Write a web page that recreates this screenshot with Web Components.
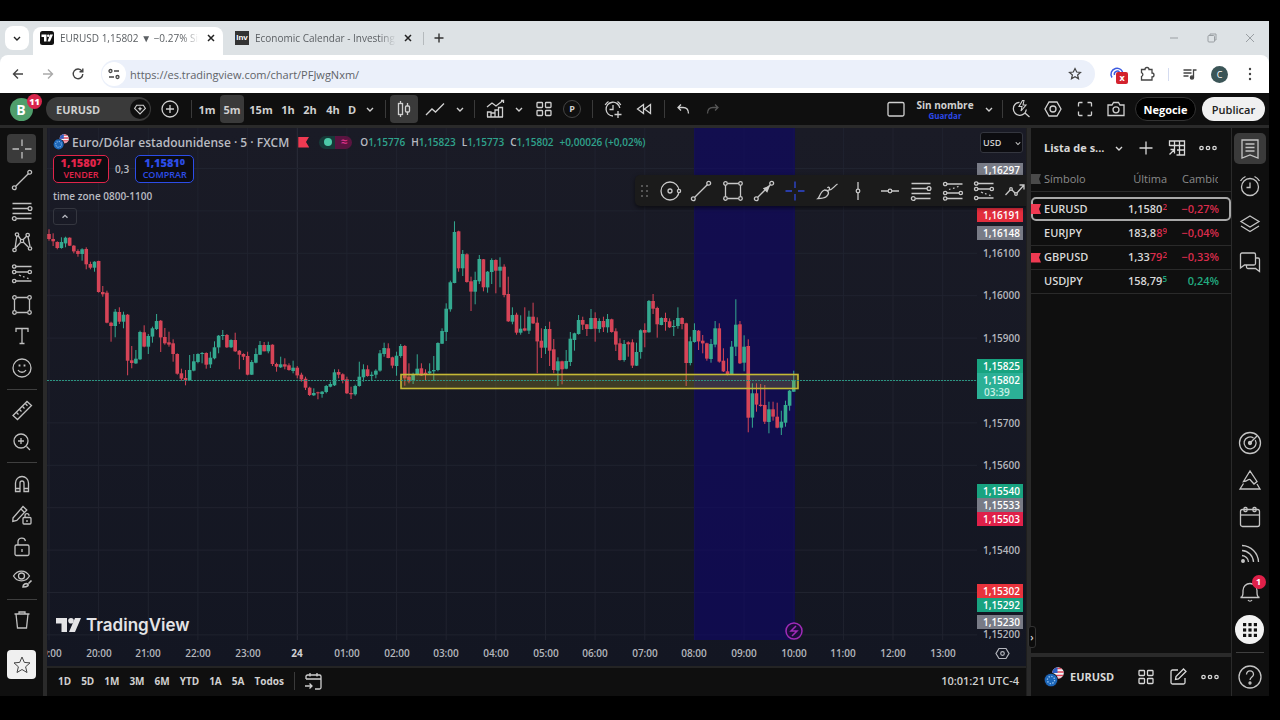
<!DOCTYPE html>
<html lang="es">
<head>
<meta charset="utf-8">
<title>EURUSD 1,15802 ▼ −0.27% Sin nombre</title>
<style>
  html, body { margin: 0; background: #000; }
  body { min-height: 100vh; box-sizing: border-box; padding: 21px 11px 24px 0; display: flex;
    font-family: "Open Sans", "Noto Sans", sans-serif; font-size: 12px; color: #d6d6d6; }
</style>
</head>
<body>
<browser-window>
  <tab-strip slot="tabs"></tab-strip>
  <address-row slot="address"></address-row>
  <tv-workspace></tv-workspace>
</browser-window>

<script>
const ICONS = {
  chevron: '<path d="M9 11l3 3 3-3" stroke-width="1.4"/>',
  up: '<path d="M9 13l3-3 3 3" stroke-width="1.6"/>',
  close: '<path d="M9 9l6 6M15 9l-6 6" stroke-width="1.5"/>',
  plus: '<path d="M12 7.500v9M7.500 12h9" stroke-width="1.4"/>',
  plusbig: '<path d="M12 5.500v13M5.500 12h13"/>',
  back: '<path d="M17 12H7.500M12 7.500L7.500 12l4.500 4.500" stroke-width="1.4"/>',
  forward: '<path d="M7 12h9.500M12 7.500l4.500 4.500-4.500 4.500" stroke-width="1.4"/>',
  reload: '<path d="M16 9.200A4.800 4.800 0 1 0 16.800 12M16.800 6.500v3.300h-3.300" stroke-width="1.4"/>',
  tune: '<circle cx="8.500" cy="9" r="1.500"/><path d="M12 9h5M7 15h5"/><circle cx="15.500" cy="15" r="1.500"/>',
  star: '<path d="M12 6.500l1.700 3.500 3.800.4-2.900 2.600.9 3.800-3.500-2-3.500 2 .9-3.800-2.900-2.600 3.800-.4z" stroke-width="1.200"/>',
  starbig: '<path d="M12 4l2.300 5.400 5.700.5-4.400 3.900 1.400 5.700-5-3-5 3 1.400-5.700L4 9.900l5.700-.5z" stroke-width="1"/>',
  puzzle: '<path d="M6.500 7.500h3.500a2 2 0 0 1 4 0h3v3.500a2 2 0 0 1 0 4v3H6.500v-3.500a2 2 0 0 0 0-3.800z" stroke-width="1.300"/>',
  playlist: '<path d="M5.500 8h8M5.500 11h8M5.500 14h5M15.500 15V8h3"/><circle cx="14" cy="15.500" r="1.600" fill="currentColor"/>',
  dotsv: '<g fill="currentColor" stroke="none"><circle cx="12" cy="7" r="1.200"/><circle cx="12" cy="12" r="1.200"/><circle cx="12" cy="17" r="1.200"/></g>',
  min: '<path d="M8 12h8" stroke-width="1"/>',
  restore: '<rect x="8" y="9.500" width="6.500" height="6.500" rx="1" stroke-width="1"/><path d="M10 9V8h6v6h-1" stroke-width="1"/>',
  closewin: '<path d="M8 8l8 8M16 8l-8 8" stroke-width="1"/>',
  gem: '<path d="M8 7.500h8l2.500 3.800L12 18l-6.500-6.700z"/><path d="M12 8.800l.9 2 2 .9-2 .9-.9 2-.9-2-2-.9 2-.9z" fill="currentColor" stroke="none"/>',
  pluscircle: '<circle cx="12" cy="12" r="8"/><path d="M12 8v8M8 12h8"/>',
  candles: '<path d="M8.500 4v2.500M8.500 17.500V20M15.500 6v3M15.500 15v3"/><rect x="6.500" y="6.500" width="4" height="11"/><rect x="13.500" y="9" width="4" height="6" rx="1"/>',
  line: '<path d="M3 18l6-6 3.500 3L21 6.500"/>',
  indicators: '<path d="M4 10l5-4 4 3 7-5.500M18 3.500h2.500V6"/><path d="M4.500 20v-5h3.500v5M8 20v-4h4v4M12 20v-7h3.500v7M15.500 20v-9.500h4V20M4 20h16"/>',
  grid: '<rect x="5" y="5.500" width="5.500" height="5" rx=".8"/><rect x="13.500" y="5.500" width="5.500" height="5" rx=".8"/><rect x="5" y="13.500" width="5.500" height="5" rx=".8"/><rect x="13.500" y="13.500" width="5.500" height="5" rx=".8"/>',
  alarm: '<path d="M18.800 11A6.900 6.900 0 1 0 12 19M12 8v4.500H8.500M4.200 8a9 9 0 0 1 3.300-3.500M16.500 4.500A9 9 0 0 1 19.800 8M17 14v7M13.500 17.500h7"/>',
  rewind: '<path d="M11.500 7.500v9l-6-4.500zM18.500 7.500v9l-6-4.500z"/>',
  undo: '<path d="M17.500 16.500c0-4-2-6-5.500-6H7.500M10 7.500l-3 3 3 3"/>',
  redo: '<path d="M6.500 16.500c0-4 2-6 5.500-6h4.500M14 7.500l3 3-3 3"/>',
  square: '<rect x="4" y="5.500" width="16" height="13.500" rx="1.500"/>',
  quick: '<path d="M10.500 5.300A6.500 6.500 0 1 0 17.300 12.500M16 16l4.500 4"/><path d="M13.500 3.500l-3.500 6h3l-1 4.500 5-6h-3l1-4.500z" stroke-width="1.100"/>',
  hex: '<path d="M8 5h8l4 7-4 7H8l-4-7z"/><circle cx="12" cy="12" r="3"/>',
  full: '<path d="M5.500 9.500V6.500a1 1 0 0 1 1-1h3M14.500 5.500h3a1 1 0 0 1 1 1v3M18.500 14.500v3a1 1 0 0 1-1 1h-3M9.500 18.500h-3a1 1 0 0 1-1-1v-3"/>',
  camera: '<path d="M4 8h4l1.500-2.500h5L16 8h4v10.500H4z"/><circle cx="12" cy="12.800" r="3"/>',
  cross: '<path d="M12 2.500V9M12 15v6.500M2.500 12H9M15 12h6.500"/>',
  trend: '<path d="M5.700 18.300L18.300 5.700"/><circle cx="4.300" cy="19.700" r="1.900"/><circle cx="19.700" cy="4.300" r="1.900"/>',
  fibo: '<path d="M2.500 4.500h19M2.500 9.500h15.500M2.500 14.500h19M6.500 19.500H21.500"/><circle cx="20" cy="9.500" r="1.900"/><circle cx="4.300" cy="19.500" r="1.900"/>',
  pattern: '<path d="M5 18.500L6.800 6M8 5.500l3.200 4.500M12.800 10l4-4M13.200 12l5 5M10.500 12.500l-5.500 6M18 6.500l2 10"/><circle cx="7" cy="4.500" r="1.700"/><circle cx="17.700" cy="5" r="1.700"/><circle cx="12" cy="11" r="1.700"/><circle cx="4.500" cy="20" r="1.700"/><circle cx="20" cy="18.500" r="1.700"/>',
  forecast: '<path d="M6 4.500h15.500M6 10h12M6 19h15.500"/><path d="M9 13l2 1M13 14.500l1.500.7M17 16l1.500.7"/><circle cx="4.200" cy="4.500" r="1.700"/><circle cx="4.200" cy="10" r="1.700"/><circle cx="19.800" cy="10" r="1.700"/><circle cx="4.200" cy="19" r="1.700"/>',
  forecast2: '<path d="M6 5h15.500M6 14h12M6 19.500h15.500"/><path d="M8 10.500l1.500-.5M12 9.500l1.500-.7M16 8l1.500-.6"/><circle cx="4.200" cy="5" r="1.700"/><circle cx="4.200" cy="14" r="1.700"/><circle cx="19.800" cy="14" r="1.700"/><circle cx="4.200" cy="19.500" r="1.700"/>',
  rect: '<path d="M6.500 4.500h11M6.500 19.500h11M4.500 6.500v11M19.500 6.500v11"/><circle cx="4.500" cy="4.500" r="1.800"/><circle cx="19.500" cy="4.500" r="1.800"/><circle cx="4.500" cy="19.500" r="1.800"/><circle cx="19.500" cy="19.500" r="1.800"/>',
  text: '<path d="M6 8V4.500h12V8M12 4.500v15M9.500 19.500h5"/>',
  smile: '<circle cx="12" cy="12" r="9"/><path d="M8 14c1.800 3 6.200 3 8 0"/><path d="M9.500 8.500v2M14.500 8.500v2" stroke-width="1.800"/>',
  ruler: '<path d="M3 17.500L17 3.500l4.500 4L7.500 21.500z"/><path d="M6.500 14.500l2 2M9.500 11.500l2 2M12.500 8.500l2 2M15.500 5.800l2 2"/>',
  zoom: '<circle cx="11" cy="11" r="7"/><path d="M16.500 16.500l3.500 3.500M11 8v6M8 11h6"/>',
  magnet: '<path d="M5.500 19.500V11a6.500 6.500 0 0 1 13 0v8.500H14V11a2 2 0 0 0-4 0v8.500zM5.500 16.500H10M14 16.500h4.500"/>',
  pencil: '<path d="M3 15l10-11.500 3.800 3.500-10 10.500-4 1zM11 6l3.500 3.500"/><rect x="13" y="14.500" width="8" height="6.500" rx="1"/><path d="M15 14.500v-1.800a2 2 0 0 1 4 0M17 17v2"/>',
  lock: '<rect x="5" y="10" width="14" height="10.500" rx="1.500"/><path d="M8 10V7a3.800 3.800 0 0 1 7.500-1M12 14v3"/>',
  eye: '<path d="M3.500 10C7.500 3.500 15.500 3.500 19.500 10 15.500 16.500 7.500 16.500 3.500 10z"/><circle cx="11.500" cy="10" r="3"/><path d="M13 21c0-3 3-4 4.500-3s.5 3-4.500 3zM18.500 17.500l3-3" stroke-width="1.600"/>',
  trash: '<path d="M4.500 6h15M9 6V4h6v2M6 6l1.500 14h9L18 6"/>',
  measure: '<circle cx="12" cy="12" r="9"/><circle cx="12" cy="12" r="2"/><circle cx="21" cy="12" r="1.600" fill="#1b1b1b"/>',
  arrow: '<path d="M5.700 18.300L18 6"/><path d="M17 7.500l-5 2 3 3z" fill="currentColor"/><circle cx="4.300" cy="19.700" r="1.900"/><circle cx="19.700" cy="4.300" r="1.900"/>',
  brush: '<path d="M3 19.500c2-1.500 2-7 6.500-8.500 4 0 5.500 3 2 6.500-2.500 2-5 2-8.500 2zM12.500 9c1-2 3 0 1.500 2 4 0 5-4 8.500-6"/>',
  vline: '<path d="M12 3v7M12 14v7"/><circle cx="12" cy="12" r="1.800"/>',
  hline: '<path d="M3 12h7M14 12h7"/><circle cx="12" cy="12" r="1.800"/>',
  zigzag: '<path d="M2.500 16l5.500-6 5 5 8-9M16.500 6H21v4.500"/><circle cx="8" cy="10" r="1.300" fill="#1b1b1b"/><circle cx="13" cy="15" r="1.300" fill="#1b1b1b"/>',
  table: '<path d="M4.500 10V5h15v14h-8M4.500 9.500h15M9.500 5v8M14.500 5v14M12 14h7.500M4.500 18.500l5-5M5.500 13.500h4v4"/>',
  dots: '<circle cx="5.500" cy="12" r="1.700"/><circle cx="12" cy="12" r="1.700"/><circle cx="18.500" cy="12" r="1.700"/>',
  list: '<path d="M4 3h16v18l-8-3-8 3zM7.500 7h9M7.500 10.500h9M7.500 14h9"/>',
  clock: '<circle cx="12" cy="13" r="8.500"/><path d="M12 8.500v5H8.500M2.500 7a11 11 0 0 1 5-4.500M16.500 2.500a11 11 0 0 1 5 4.500"/>',
  layers: '<path d="M12 4l9 5.500-9 5.500-9-5.500zM3 14l9 5.500 9-5.500"/>',
  chat: '<path d="M4 3h12a1.500 1.500 0 0 1 1.500 1.500v9A1.500 1.500 0 0 1 16 15H6.500L2.500 18V4.500A1.500 1.500 0 0 1 4 3zM17.500 8H20a1.500 1.500 0 0 1 1.500 1.500V21.500L17.500 18.500H10a1.500 1.500 0 0 1-1.500-1.500v-2"/>',
  radar: '<circle cx="12" cy="12" r="10.500"/><path d="M15.500 7A6 6 0 1 0 17.300 9M12 12l7-7"/><circle cx="12" cy="12" r="1.500" fill="currentColor"/>',
  pyramid: '<path d="M5.500 13.500L12 3l7 10.500-3 2.500-4-4.500c-1.500-1-2.500 1.500-4 1.500zM5.500 15.500L2 21h20l-3-5"/>',
  calendar: '<rect x="2.500" y="4.500" width="19" height="17" rx="2"/><path d="M2.500 10h19"/><rect x="6" y="2.500" width="3" height="4" rx="1"/><rect x="15" y="2.500" width="3" height="4" rx="1"/>',
  rss: '<path d="M4 3.500A17 17 0 0 1 20.500 20M4 8.500A12 12 0 0 1 15.500 20M4 13.500a7 7 0 0 1 6.500 6.500"/><circle cx="5" cy="19" r="1.300" fill="currentColor"/>',
  bell: '<path d="M2.500 18.500c2-.5 2.500-1.500 2.500-5v-2a7 7 0 0 1 14 0v2c0 3.500.5 4.500 2.500 5zM2.500 15.800M10 21c1 1.500 3 1.500 4 0"/>',
  apps: '<g fill="currentColor" stroke="none"><rect x="5" y="5" width="3.200" height="3.200"/><rect x="10.400" y="5" width="3.200" height="3.200"/><rect x="15.800" y="5" width="3.200" height="3.200"/><rect x="5" y="10.400" width="3.200" height="3.200"/><rect x="10.400" y="10.400" width="3.200" height="3.200"/><rect x="15.800" y="10.400" width="3.200" height="3.200"/><rect x="5" y="15.800" width="3.200" height="3.200"/><rect x="10.400" y="15.800" width="3.200" height="3.200"/><rect x="15.800" y="15.800" width="3.200" height="3.200"/></g>',
  help: '<circle cx="12" cy="12" r="11"/><path d="M8.500 9.500c0-5 7-4.500 7 0 0 2.500-3.500 2.500-3.500 5.500"/><circle cx="12" cy="18" r="1"/>',
  edit: '<path d="M12 5H6.500A1.500 1.500 0 0 0 5 6.500v11A1.500 1.500 0 0 0 6.500 19h11a1.500 1.500 0 0 0 1.500-1.500V13M9.500 14.500l.5-3L17.500 4 20 6.500 12.500 14z"/>',
  goto: '<path d="M5 10V7.500A1.500 1.500 0 0 1 6.500 6h12A1.500 1.500 0 0 1 20 7.500v11a1.500 1.500 0 0 1-1.500 1.500H14M5 10h15M9 4v3.500M16 4v3.500M4 17h7M8.500 14.500L11 17l-2.500 2.500"/>',
  grip: '<g fill="#555" stroke="none"><rect x="8" y="6" width="2" height="2"/><rect x="13" y="6" width="2" height="2"/><rect x="8" y="11" width="2" height="2"/><rect x="13" y="11" width="2" height="2"/><rect x="8" y="16" width="2" height="2"/><rect x="13" y="16" width="2" height="2"/></g>',
  tv: '<rect x="5" y="5" width="14" height="14" rx="2.500" fill="#111" stroke="none"/><path d="M6.500 8.500h5v7H9v-4.500H6.500zM15 8.500h3l-3 7h-2.500z" fill="#fff" stroke="none"/><circle cx="13.200" cy="9.700" r="1.200" fill="#fff" stroke="none"/>'
};

/* Base class: writes the styles and the markup of the element into its open shadow root. */
class Part extends HTMLElement {
  connectedCallback() {
    if (this.shadowRoot) return;
    this.attachShadow({ mode: "open" }).innerHTML =
      `<style>*{box-sizing:border-box}button{font:inherit;color:inherit;background:none;border:0;padding:0;margin:0;display:flex;align-items:center;justify-content:center}${this.css()}</style>${this.html()}`;
  }
}
const define = (name, css, html) =>
  customElements.define(name, class extends Part {
    css() { return typeof css === "function" ? css(this) : css; }
    html() { return typeof html === "function" ? html(this) : html; }
  });
const icon = (name, size = 24) => `<ui-icon name="${name}" size="${size}"></ui-icon>`;
const btn = (name, label, cls = "") => `<button class="${cls}" aria-label="${label}">${icon(name)}</button>`;

define("ui-icon",
  el => `:host{display:block;flex:none;width:${el.getAttribute("size")}px;height:${el.getAttribute("size")}px} svg{display:block}`,
  el => `<svg viewBox="0 0 24 24" width="100%" height="100%" fill="none" stroke="currentColor" stroke-width="1.300" aria-hidden="true">${ICONS[el.getAttribute("name")]}</svg>`);

define("pair-logo", `:host{display:block;flex:none;width:20px;height:20px} svg{display:block}`,
  `<svg viewBox="0 0 20 20" width="20" height="20"><clipPath id="c"><circle cx="14" cy="6" r="5.800"/></clipPath>
   <g clip-path="url(#c)"><path fill="#f4f4f8" d="M8 0h12v12H8z"/><path stroke="#e0455a" stroke-width="1.600" d="M8 1.500h12M8 5h12M8 8.500h12M8 11.500h12"/><path fill="#2f5fc4" d="M8 0h5.500v6H8z"/></g>
   <circle cx="7" cy="13" r="7.200" fill="#14161f"/><circle cx="7" cy="13" r="6.300" fill="#1c66b8"/><circle cx="7" cy="13" r="3.600" fill="none" stroke="#9cc7f2" stroke-width="1.300" stroke-dasharray="1.300 1.500"/></svg>`);

define("browser-window",
  `:host{display:flex;flex-direction:column;flex:1;min-width:0}
   ::slotted(tv-workspace){flex:1}`,
  `<slot name="tabs"></slot><slot name="address"></slot><slot></slot>`);

define("tab-strip",
  `:host{display:block;background:#dde2e5;color:#5c6064;font-size:10px}
   div{display:flex;align-items:center;height:34px}
   .menu{width:24px;height:24px;border-radius:8px;background:#fff;color:#222;margin:0 4px 0 5px}
   .tab{border-radius:8px 8px 0 0;height:28px;align-self:flex-end;padding:0 0 6px 2px;width:190px}
   .on{background:#fff}
   .two{width:194px;padding-left:8px}
   .two button{margin-right:-3px}
   a{flex:1;min-width:0;white-space:nowrap;color:inherit;text-decoration:none;margin-left:1px;
     -webkit-mask:linear-gradient(90deg,#000 88%,transparent);mask:linear-gradient(90deg,#000 88%,transparent)}
   .tab button{color:#222}
   .inv{flex:none;width:14px;height:14px;background:#333;color:#fff;font:bold 8px/14px "Liberation Sans",sans-serif;text-align:center;margin:0 5px 0 4px}
   .bar{width:1px;height:13px;background:#b5babd;margin:0 3px 0 6px}
   .new{color:#333}
   .win{margin-left:auto;color:#9a9fa3;gap:14px;padding-right:7px}`,
  `<div><button class="menu" aria-label="Buscar pestañas">${icon("chevron")}</button>
   <div class="tab on">${icon("tv")}<a href="#eurusd">EURUSD 1,15802 ▼ −0.27% Sin</a>${btn("close", "Cerrar")}</div>
   <div class="tab two"><span class="inv">Inv</span><a href="#calendar">Economic Calendar - Investing.</a>${btn("close", "Cerrar")}</div>
   <span class="bar"></span>${btn("plus", "Nueva pestaña", "new")}
   <div class="win">${btn("min", "Minimizar")}${btn("restore", "Restaurar")}${btn("closewin", "Cerrar ventana")}</div></div>`);

define("address-row",
  `:host{display:block;background:#dde2e5;color:#444}
   .row{display:flex;align-items:center;height:38px;background:#fff;border-radius:8px 8px 0 0;padding:0 7px 0 6px;gap:6px}
   .off{color:#aaa}
   .box{flex:1;min-width:0;display:flex;align-items:center;height:28px;border-radius:14px;background:#ebf0fa;padding:0 8px 0 1px;margin:0 4px 0 5px}
   .site{width:24px;height:24px;border-radius:12px;background:#fff}
   input{flex:1;min-width:0;border:0;outline:0;background:none;font:11px "Open Sans",sans-serif;color:#5f6368;padding:0 4px}
   .ext{position:relative;color:#3d5be0;width:24px}
   .ext b{position:absolute;left:11px;top:10px;width:12px;height:12px;border-radius:2px;background:#d3222d;color:#fff;font-size:9px;line-height:12px}
   .bar{width:1px;height:13px;background:#d5dcf0;margin:0 3px}
   .me{width:17px;height:17px;border-radius:9px;background:#3b5557;color:#fff;font-size:9px;margin:0 4px 0 3px}`,
  `<div class="row">${btn("back", "Atrás")}${btn("forward", "Adelante", "off")}${btn("reload", "Recargar")}
   <div class="box"><button class="site" aria-label="Información del sitio">${icon("tune")}</button>
   <input aria-label="Dirección" value="https://es.tradingview.com/chart/PFJwgNxm/">${btn("star", "Favorito")}</div>
   <button class="ext" aria-label="Extensión"><svg width="24" height="24" fill="none" stroke="currentColor" stroke-width="1.500"><path d="M7 15.500a6 6 0 1 1 11-3M9.500 13a3 3 0 0 1 5-3"/></svg><b>x</b></button>
   ${btn("puzzle", "Extensiones")}<span class="bar"></span>${btn("playlist", "Medios")}<button class="me">C</button>${btn("dotsv", "Menú")}</div>`);

const cell = (w, content, cls = "", label = "") =>
  `<button class="${cls}" style="width:${w}px"${label ? ` aria-label="${label}"` : ""}>${content}</button>`;
const bar = w => `<span class="bar" style="width:${w}px"></span>`;

define("tv-topbar",
  `:host{display:flex;align-items:center;height:35px;background:#0f0f0f;border-bottom:3px solid #2a2a2a;color:#d0d0d0;font-size:11px;font-weight:700;padding-right:4px}
   button{flex:none;height:28px}
   .user{position:relative}
   .user i{font-style:normal;width:23px;height:23px;border-radius:12px;background:#4f9e6b;color:#fff;font-size:14px;line-height:23px;margin-right:4px}
   .user b{position:absolute;left:27px;top:-1px;width:15px;height:15px;border-radius:8px;background:#d8264c;color:#fff;font-size:9px;line-height:15px}
   .pill{width:105px;height:24px;border-radius:12px;background:#3a3a3a;justify-content:space-between;padding:0 1px 0 10px}
   .pill span{width:20px;height:20px;border-radius:10px;background:#0f0f0f;display:flex;align-items:center;justify-content:center}
   .bar{flex:none;height:18px;background:linear-gradient(#3a3a3a,#3a3a3a) center/1px 100% no-repeat}
   .on{background:#3a3a3a;border-radius:4px}
   .p i{font:bold 9px/16px "Open Sans",sans-serif;width:18px;height:18px;border:1px solid #444;border-radius:9px}
   .dim{color:#555}
   .fill{flex:1}
   .name{flex-direction:column;font-size:10px;line-height:14px}
   .name small{font-size:8px;line-height:11px;margin-top:-2px;color:#2c48e8}
   .trade{width:61px;height:24px;border:1px solid #333;border-radius:12px;background:#000;color:#fff;margin:0 6px 0 3px}
   .pub{width:63px;height:24px;border-radius:12px;background:#f0f0f0;color:#222;font-weight:600}`,
  `${cell(46, "<i>B</i><b>11</b>", "user", "Perfil")}<button class="pill">EURUSD<span>${icon("gem", 20)}</span></button>
   ${cell(38, icon("pluscircle"), "", "Comparar")}${bar(5)}
   ${cell(26, "1m")}${cell(24, "5m", "on")}${cell(34, "15m")}${cell(20, "1h")}${cell(24, "2h")}${cell(22, "4h")}${cell(16, "D")}${cell(20, icon("chevron"), "", "Intervalos")}${bar(10)}
   ${cell(28, icon("candles"), "on", "Velas")}${cell(34, icon("line"), "", "Línea")}${cell(16, icon("chevron"), "", "Tipos")}${bar(12)}
   ${cell(30, icon("indicators"), "", "Indicadores")}${cell(18, icon("chevron"), "", "Favoritos")}${cell(32, icon("grid"), "", "Plantillas")}${cell(24, "<i>P</i>", "p")}${bar(16)}
   ${cell(26, icon("alarm"), "", "Alerta")}${cell(36, icon("rewind"), "", "Reproducir")}${bar(4)}${cell(34, icon("undo"), "", "Deshacer")}${cell(26, icon("redo"), "dim", "Rehacer")}
   <span class="fill"></span>
   ${cell(28, icon("square"), "", "Disposición")}${cell(70, "<span>Sin nombre</span><small>Guardar</small>", "name")}${cell(18, icon("chevron"), "", "Gestionar")}${bar(8)}
   ${cell(30, icon("quick"), "", "Búsqueda rápida")}${cell(34, icon("hex"), "", "Ajustes")}${cell(30, icon("full"), "", "Pantalla completa")}${cell(32, icon("camera"), "", "Captura")}
   <button class="trade">Negocie</button><button class="pub">Publicar</button>`);

define("tool-rail",
  `:host{display:flex;flex-direction:column;align-items:center;width:47px;background:#0f0f0f;border-right:4px solid #2a2a2a;color:#c0c0c0;padding:5px 0 17px}
   button{flex:1 1 0;width:29px}
   .on{background:#3a3a3a;border-radius:4px;flex:0 0 29px;margin:1px 0}
   hr{width:30px;height:1px;border:0;background:#3f3f3f;margin:5px 0}
   .fav{flex:0 0 29px;margin-top:14px;border-radius:4px;background:#f0f0f0;color:#444}`,
  `${btn("cross", "Cruz", "on")}${btn("trend", "Línea de tendencia")}${btn("fibo", "Fibonacci")}${btn("pattern", "Patrones")}${btn("forecast", "Previsión")}${btn("rect", "Formas")}${btn("text", "Texto")}${btn("smile", "Iconos")}<hr>
   ${btn("ruler", "Medir")}${btn("zoom", "Acercar")}<hr>${btn("magnet", "Imán")}${btn("pencil", "Modo dibujo")}${btn("lock", "Bloquear")}${btn("eye", "Ocultar")}<hr>
   ${btn("trash", "Eliminar")}${btn("starbig", "Favoritos", "fav")}`);

define("favorite-tools",
  `:host{display:flex;align-items:center;height:31px;background:#1b1b1b;border-radius:5px;color:#c8c8c8;box-shadow:0 2px 4px #0008}
   .grip{width:19px;flex:none}
   button:not(.grip){flex:1 1 0;min-width:0}
   .sel{color:#2f48d8}`,
  `${btn("grip", "Mover", "grip")}${btn("measure", "Círculo")}${btn("trend", "Tendencia")}${btn("rect", "Rectángulo")}${btn("arrow", "Flecha")}${btn("cross", "Cruz", "sel")}${btn("brush", "Pincel")}${btn("vline", "Vertical")}${btn("hline", "Horizontal")}${btn("fibo", "Fibonacci")}${btn("forecast2", "Posición larga")}${btn("forecast", "Posición corta")}${btn("zigzag", "Polilínea")}`);

/* Five-minute bars from 19:00 to 10:00. Each: direction, high, body top, body bottom, low, in thirds of a pixel below the segment's top. */
const SEGMENTS = [
  { top: 92, bars: `r 28 42 57 62|r 40 57 64 78|r 64 66 84 88|g 52 66 84 86|g 50 53 70 82|r 52 53 77 78|r 75 77 94 100|r 88 93 102 110|g 85 88 102 122|r 82 87 133 148|r 125 132 143 148|g 124 125 143 155|r 122 123 216 218|r 198 216 223 230|r 212 218 308 310|r 305 308 318 365|g 267 275 318 352|r 262 276 305 312|g 275 284 305 325|r 282 284 422 466|r 378 421 429 445|g 390 416 430 432|g 332 336 418 420|r 316 337 380 382|g 342 348 380 402|g 320 325 350 368|g 282 303 327 330|r 300 302 352 396|r 324 351 370 374|r 335 367 374 380|r 358 370 402 425|r 400 402 461 464|r 446 460 476 482|r 450 474 481 496|g 405 450 481 482|g 402 424 452 454|g 400 402 426 430|g 396 399 402 430|r 397 399 434 446|g 395 413 433 444|g 364 382 415 418|g 345 347 382 400|g 330 345 348 360|r 342 345 382 384|g 358 360 382 384|r 338 360 394 396` },
  { top: 82, bars: `r 420 422 434 478|r 430 432 440 450|r 425 438 494 496|g 450 456 494 495|g 415 432 458 460|g 393 405 434 435|r 396 405 424 424|g 395 405 424 430|r 403 404 462 468|r 458 462 470 485|g 440 463 472 474|r 445 463 470 478|r 460 466 480 482|g 452 473 483 490|r 468 473 496 505|r 488 494 508 515|r 500 506 533 540|r 530 533 555 558|g 535 549 556 558|r 545 547 550 568|g 543 545 552 563|g 525 528 546 550|g 515 522 530 532|g 478 487 526 528|r 478 486 494 505|r 490 493 510 520|r 500 508 550 552|r 530 549 553 567|g 524 528 553 557|g 455 500 528 530|g 463 478 502 515|r 466 478 498 500|g 485 494 498 510|g 478 482 494 505|g 420 430 482 485|g 398 414 432 440|r 400 415 444 445|r 440 442 467 475|g 425 437 468 497|g 402 408 438 443|r 405 408 505 527|r 460 500 514 520|g 488 495 510 522|g 433 476 495 496|r 460 475 497 498|r 478 488 492 512|g 460 484 490 492|g 438 480 484 512|g 397 399 480 484|g 355 363 401 402|g 280 296 366 393|g 212 217 298 305|g 34 66 219 220|r 62 64 175 185|g 120 132 175 198|r 130 133 216 218|r 200 214 245 303|g 185 210 245 283|g 135 147 214 222|r 147 148 232 244|g 183 185 232 248|g 145 150 186 222|r 148 150 182 250|g 142 170 182 232|r 163 170 255 262|r 200 252 334 336|g 292 315 335 343|r 308 314 368 374|g 316 356 368 374|r 292 355 362 364` },
  { top: 112, bars: `g 212 230 272 282|r 188 230 250 252|r 232 248 304 400|r 265 302 323 354|g 258 267 323 342|r 245 267 332 378|r 297 328 390 400|g 352 364 392 438|r 362 364 388 433|g 330 363 386 388|g 276 296 366 378|g 278 280 300 332|g 225 240 282 284|r 230 240 254 270|r 252 253 267 288|g 207 234 267 268|r 217 234 266 305|g 235 243 267 278|r 230 243 262 276|g 222 237 262 278|r 236 238 276 278|r 265 274 314 333|r 295 310 360 362|g 300 312 360 365|r 304 307 313 350|r 298 307 377 384|g 308 336 377 378|g 268 271 336 356|r 250 270 278 322|g 180 183 277 278|r 162 183 206 222|r 200 204 253 293|g 232 234 255 256|r 218 234 246 272|r 235 244 262 264|g 240 258 261 288|g 202 234 258 266|r 232 234 252 268|r 248 250 369 438|g 290 304 369 376|g 250 270 306 308|r 270 272 304 330|r 285 302 310 340|r 308 310 356 362|g 297 312 357 368|g 243 265 314 322|r 250 265 365 368|r 325 362 394 396|r 355 394 404 406|g 303 320 403 404|g 178 254 320 348|r 243 253 370 372|g 286 320 368 394|r 298 318 533 577|g 430 460 533 563|r 430 460 494 515|r 432 494 498 500|r 435 495 545 552|g 485 508 546 580|r 485 508 530 542|r 488 530 563 565|g 512 545 563 585|g 482 495 548 560|g 450 452 497 512|g 392 420 455 456` }
];
const HOUR = 49.65, STEP = HOUR / 12, PLOT_W = 930, PLOT_H = 512;

function candleMarkup() {
  let k = 0, out = "";
  for (const seg of SEGMENTS) for (const b of seg.bars.split("|")) {
    const [dir, ...v] = b.split(" ");
    const [hi, top, bot, lo] = v.map(n => seg.top + n / 3);
    const x = 2 + k++ * STEP;
    out += `<g class="${dir}"><path d="M${x.toFixed(2)} ${hi.toFixed(1)}V${lo.toFixed(1)}"/><rect x="${(x - 1.8).toFixed(2)}" y="${top.toFixed(1)}" width="3.600" height="${Math.max(1, bot - top).toFixed(1)}"/></g>`;
  }
  return out;
}
function gridMarkup() {
  let out = "";
  for (let i = 0; i < 19; i++) out += `<path${i === 5 ? ' class="day"' : ""} d="M${(2 + i * HOUR).toFixed(1)} 0V${PLOT_H}"/>`;
  for (let i = 0; i < 12; i++) out += `<path d="M0 ${(40.5 + i * 42.4).toFixed(1)}H${PLOT_W}"/>`;
  return out;
}
function timeMarkup() {
  return ["19:00","20:00","21:00","22:00","23:00","24","01:00","02:00","03:00","04:00","05:00","06:00","07:00","08:00","09:00","10:00","11:00","12:00","13:00"]
    .map((t, i) => `<text class="time${t === "24" ? " strong" : ""}" x="${Math.round(2 + i * HOUR)}" y="529">${t}</text>`).join("");
}
const PRICES = [[125,"1,16100"],[167,"1,16000"],[210,"1,15900"],[295,"1,15700"],[337,"1,15600"],[422,"1,15400"],[506,"1,15200"]];
const TAGS = [[42,"#787b86","1,16297"],[87,"#e32d3d","1,16191"],[105,"#787b86","1,16148"],[238,"#18a380","1,15825"],[363,"#18a380","1,15540"],[377,"#787b86","1,15533"],[391,"#df2049","1,15503"],[463,"#e9333c","1,15302"],[477,"#18a380","1,15292"],[494,"#787b86","1,15230"]];

define("price-chart",
  `:host{display:block;height:100%;background:linear-gradient(#1a1b26,#131622)}
   svg{display:block;width:100%;height:100%}
   .grid path{stroke:#20232f;fill:none}
   .grid .day{stroke:#2b2e3a}
   .g path{stroke:#34a990}.g rect{fill:#34a990}
   .r path{stroke:#d64457}.r rect{fill:#d64457}
   text{font:600 10px "Open Sans",sans-serif;fill:#b4b6bd}
   .time{text-anchor:middle}.strong{font-weight:700;fill:#d0d0d4}
   .price{text-anchor:end}.tag{fill:#fff}.left{fill:#c8efe5}`,
  `<svg viewBox="0 0 979 538" preserveAspectRatio="xMaxYMin slice" role="img" aria-label="Gráfico de velas EURUSD">
   <g class="grid">${gridMarkup()}</g>
   <rect x="647" width="101" height="${PLOT_H}" fill="#0f0764" fill-opacity=".66"/>
   <g>${candleMarkup()}</g>
   <rect x="354" y="246.500" width="397" height="14" fill="#b9a82c" fill-opacity=".25" stroke="#c5b936" stroke-width="1.600"/>
   <path d="M0 252.500H930" stroke="#2b9481" stroke-dasharray="2 1"/>
   <g fill="none" stroke="#a02bb8" stroke-width="1.500"><circle cx="747" cy="503" r="8" fill="#1a0d3a"/><path d="M749 498l-5 5h6l-5 5"/></g>
   ${PRICES.map(([y, t]) => `<text class="price" x="973" y="${y + 4}">${t}</text>`).join("")}
   ${TAGS.map(([y, c, t]) => `<rect x="930" y="${y - 7}" width="46" height="14" fill="${c}"/><text class="price tag" x="973" y="${y + 4}">${t}</text>`).join("")}
   <rect x="930" y="245" width="46" height="26" fill="#2bb096"/><text class="price tag" x="973" y="256">1,15802</text><text class="left" x="937" y="268">03:39</text>
   ${timeMarkup()}
   <g fill="none" stroke="#b4b6bd" stroke-width="1.200"><path d="M952 520.500h7l3 5-3 5h-7l-3-5z"/><circle cx="955.500" cy="525.500" r="1.800"/></g></svg>`);

define("chart-legend",
  `:host{display:flex;flex-direction:column;align-items:flex-start;gap:3px;color:#b9bbc2;font-weight:600}
   .row{display:flex;align-items:center;white-space:nowrap;height:20px}
   h1{font-size:12px;font-weight:600;margin:0 9px 0 0}
   pair-logo{margin:0 1px 0 -2px;transform:scale(.8)}
   .flag{width:11px;height:11px;background:#ef3a52;clip-path:polygon(0 0,100% 0,70% 50%,100% 100%,0 100%);margin-right:10px}
   .state{display:flex;width:33px;height:13px;border-radius:7px;background:linear-gradient(90deg,#163a38 50%,#5a1440 50%);align-items:center;justify-content:space-around;color:#e0328c;font-size:12px;line-height:10px}
   .state i{width:8px;height:8px;border-radius:4px;background:#4cc9a8}
   .ohlc{margin-left:8px;font-size:10px;color:#2fa38c;display:flex;gap:6px}
   .ohlc b{font-weight:600;color:#b9bbc2}
   .trade{height:28px;gap:6px;font-size:10px}
   .trade button{flex-direction:column;width:56px;height:28px;border:1px solid;border-radius:5px;background:#0c0c12;font-size:9px;line-height:12px;font-weight:600}
   .trade .buy{width:59px}
   .trade strong{font-size:11px;line-height:12px}
   .sell{color:#e0244a}.buy{color:#2c4de8}
   sup{font-size:9px;line-height:0;vertical-align:2px}
   .ind{font-size:10px;height:19px}
   .fold{width:24px;height:17px;border:1px solid #34363f;border-radius:3px}`,
  `<div class="row"><pair-logo></pair-logo><h1>Euro/Dólar estadounidense · 5 · FXCM</h1><span class="flag"></span><span class="state"><i></i>≈</span>
   <span class="ohlc"><span><b>O</b>1,15776</span><span><b>H</b>1,15823</span><span><b>L</b>1,15773</span><span><b>C</b>1,15802</span><span>+0,00026 (+0,02%)</span></span></div>
   <div class="row trade"><button class="sell"><strong>1,1580<sup>7</sup></strong>VENDER</button><span>0,3</span><button class="buy"><strong>1,1581<sup>0</sup></strong>COMPRAR</button></div>
   <div class="row ind">time zone 0800-1100</div>
   <button class="fold" aria-label="Plegar">${icon("up", 20)}</button>`);

define("tv-wordmark", `:host{display:flex;align-items:center;gap:5px;color:#e4e4e6;font:600 17px/22px Inter,"Open Sans",sans-serif} svg{display:block}`,
  `<svg width="25" height="14" fill="currentColor"><path d="M0 0h11v14H5.500V5.500H0zM19 0h6l-6 14h-6z"/><circle cx="15" cy="2.800" r="2.800"/></svg><span>TradingView</span>`);

define("chart-pane",
  `:host{display:flex;flex-direction:column;flex:1;min-width:0;border-right:1px solid #1e1e1e}
   .plot{position:relative;flex:1;min-height:538px;overflow:hidden}
   price-chart,chart-legend,favorite-tools,tv-wordmark,select{position:absolute}
   price-chart{inset:0}
   chart-legend{left:6px;top:4px}
   tv-wordmark{left:9px;bottom:30px}
   favorite-tools{right:-5px;top:47px;width:396px}
   select{right:3px;top:4px;width:43px;height:21px;border:1px solid #34363f;border-radius:3px;background:#0c0c10;color:#d0d0d0;font:600 9px "Open Sans",sans-serif;padding:0 0 0 2px;appearance:none}
   .caret{position:absolute;right:-1px;top:6px;width:18px;height:18px;color:#d0d0d0;pointer-events:none}
   .ranges{display:flex;align-items:center;height:30px;border-top:2px solid #242424;background:#0f0f0f;font-size:10px;font-weight:700;padding:0 7px 3px 11px;gap:10px;color:#d0d0d0}
   .bar{width:1px;height:18px;background:#3a3a3a;margin-right:-4px}
   time{margin-left:auto;font-size:11px;font-weight:600}`,
  `<div class="plot"><price-chart></price-chart><chart-legend></chart-legend><select aria-label="Divisa"><option>USD</option></select><span class="caret">${icon("chevron", 18)}</span><favorite-tools></favorite-tools><tv-wordmark></tv-wordmark></div>
   <div class="ranges">${["1D","5D","1M","3M","6M","YTD","1A","5A","Todos"].map(t => `<button>${t}</button>`).join("")}<span class="bar"></span>${btn("goto", "Ir a")}<time>10:01:21 UTC-4</time></div>`);

define("watch-list",
  `:host{display:flex;flex-direction:column;position:relative;width:204px;flex:none;background:#0f0f0f;border-left:4px solid #2a2a2a;color:#d8d8d8;font-size:11px;font-weight:600}
   header,footer{display:flex;align-items:center;flex:none}
   header{height:39px;padding-left:13px}
   header button:first-child{width:61px;justify-content:flex-start;font-weight:700;white-space:nowrap}
   header button{width:31px}
   header .chev{width:28px}header .plus{width:26px}header .tbl{width:36px}header .more{width:26px}
   table{width:100%;border-collapse:collapse;table-layout:fixed}
   th,td{padding:0;text-align:right;height:24px;line-height:16px;border-bottom:1px solid #2a2a2a;white-space:nowrap;overflow:hidden}
   th{font-weight:500;color:#8b8b8b}
   th:first-child,td:first-child{text-align:left;padding-left:13px;position:relative}
   th:last-child span{display:block;overflow:hidden;width:36px;margin-left:15px;text-align:left}
   th:last-child,td:last-child{padding-right:12px}
   thead tr:last-child td{height:6px;border:0}
   .flag::before{content:"";position:absolute;left:0;top:7px;width:10px;height:10px;background:#ef3a52;clip-path:polygon(0 0,100% 0,80% 50%,100% 100%,0 100%)}
   th.flag::before{background:#4a4a4a}
   tr.sel{outline:2px solid #a8a8a8;outline-offset:-2px;border-radius:5px}
   tr.sel td{border-color:transparent}
   sup{font-size:8px;line-height:0;vertical-align:3px}
   .dn{color:#d92c4c}.up{color:#22ab80}
   footer{margin-top:auto;height:43px;border-top:4px solid #2a2a2a;padding-left:13px}
   footer span{width:60px;margin-left:6px;font-weight:700}
   footer button{width:32px}
   .handle{position:absolute;left:-3px;bottom:48px;width:8px;height:22px;border-radius:3px;background:#0c0c0c;border:1px solid #333;font-size:10px}`,
  `<header><button>Lista de s...</button>${btn("chevron", "Listas", "chev")}${btn("plusbig", "Añadir", "plus")}${btn("table", "Vista", "tbl")}${btn("dots", "Más", "more")}</header>
   <table><colgroup><col style="width:68px"><col style="width:68px"><col></colgroup>
   <thead><tr><th class="flag">Símbolo</th><th>Última</th><th><span>Cambio</span></th></tr><tr><td colspan="3"></td></tr></thead><tbody>
   <tr class="sel"><td class="flag">EURUSD</td><td>1,1580<sup class="dn">2</sup></td><td class="dn">−0,27%</td></tr>
   <tr><td>EURJPY</td><td>183,8<span class="dn">8<sup>9</sup></span></td><td class="dn">−0,04%</td></tr>
   <tr><td class="flag">GBPUSD</td><td>1,33<span class="dn">79<sup>2</sup></span></td><td class="dn">−0,33%</td></tr>
   <tr><td>USDJPY</td><td>158,79<sup class="up">5</sup></td><td class="up">0,24%</td></tr></tbody></table>
   <footer><pair-logo></pair-logo><span>EURUSD</span>${btn("grid", "Cuadrícula")}${btn("edit", "Notas")}${btn("dots", "Más")}</footer>
   <button class="handle" aria-label="Plegar panel">›</button>`);

define("side-rail",
  `:host{display:flex;flex-direction:column;align-items:center;width:38px;flex:none;background:#0f0f0f;border-left:1px solid #2a2a2a;color:#c4c4c4;padding:1px 2px 1px 0}
   button{flex:none;width:32px;height:37px;position:relative}
   .top{height:38px}
   .on{height:31px;margin:4px 0 3px;background:#3a3a3a;border-radius:5px}
   .fill{flex:1}
   .apps{height:29px;width:29px;border-radius:15px;background:#f2f2f2;color:#111;margin:6px 0 7px}
   b{position:absolute;left:18px;top:3px;width:14px;height:14px;border-radius:7px;background:#df2049;color:#fff;font-size:9px;line-height:14px}
   hr{width:28px;height:1px;border:0;background:#3f3f3f;margin:1px 0 5px}`,
  `${btn("list", "Lista", "on")}${btn("clock", "Alertas", "top")}${btn("layers", "Objetos", "top")}${btn("chat", "Chat", "top")}<span class="fill"></span>
   ${btn("radar", "Screener")}${btn("pyramid", "Pine")}${btn("calendar", "Calendario")}${btn("rss", "Noticias")}<button aria-label="Notificaciones">${icon("bell")}<b>1</b></button>${btn("apps", "Aplicaciones", "apps")}<hr>${btn("help", "Ayuda")}`);

define("tv-workspace",
  `:host{display:flex;flex-direction:column;min-width:0}
   main{flex:1;display:flex;min-height:0}`,
  `<tv-topbar></tv-topbar><main><tool-rail></tool-rail><chart-pane></chart-pane><watch-list></watch-list><side-rail></side-rail></main>`);
</script>
</body>
</html>
